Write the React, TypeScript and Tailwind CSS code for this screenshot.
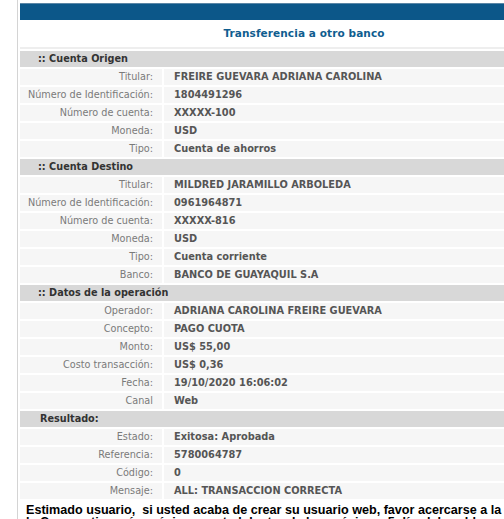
import React from "react";

type Row = [string, string];
type Section = { title: string; rows: Row[]; indent?: boolean };

const sections: Section[] = [
  {
    title: ":: Cuenta Origen",
    rows: [
      ["Titular:", "FREIRE GUEVARA ADRIANA CAROLINA"],
      ["Número de Identificación:", "1804491296"],
      ["Número de cuenta:", "XXXXX-100"],
      ["Moneda:", "USD"],
      ["Tipo:", "Cuenta de ahorros"],
    ],
  },
  {
    title: ":: Cuenta Destino",
    rows: [
      ["Titular:", "MILDRED JARAMILLO ARBOLEDA"],
      ["Número de Identificación:", "0961964871"],
      ["Número de cuenta:", "XXXXX-816"],
      ["Moneda:", "USD"],
      ["Tipo:", "Cuenta corriente"],
      ["Banco:", "BANCO DE GUAYAQUIL S.A"],
    ],
  },
  {
    title: ":: Datos de la operación",
    rows: [
      ["Operador:", "ADRIANA CAROLINA FREIRE GUEVARA"],
      ["Concepto:", "PAGO CUOTA"],
      ["Monto:", "US$ 55,00"],
      ["Costo transacción:", "US$ 0,36"],
      ["Fecha:", "19/10/2020 16:06:02"],
      ["Canal", "Web"],
    ],
  },
  {
    title: "Resultado:",
    indent: true,
    rows: [
      ["Estado:", "Exitosa: Aprobada"],
      ["Referencia:", "5780064787"],
      ["Código:", "0"],
      ["Mensaje:", "ALL: TRANSACCION CORRECTA"],
    ],
  },
];

export default function App() {
  return (
    <div className="w-[504px] h-[519px] overflow-hidden bg-white" style={{ fontFamily: '"DejaVu Sans", Verdana, sans-serif' }}>
      <div className="flex">
        <div className="w-[17px] shrink-0" />
        <div className="w-[1px] shrink-0 bg-[#d4d4d4] h-[519px]" />
        <div className="w-[570px] shrink-0 pl-[2px] pt-[3px]">
          <div className="h-[17px] bg-[#0c5789] border-t border-[#5a86a6]" />
          <div className="h-[29px] flex items-center justify-center border-b-2 border-[#eeeeee]">
            <span className="text-[10.5px] font-bold text-[#0f5d8f] tracking-[0.1px]">Transferencia a otro banco</span>
          </div>
          <div className="flex flex-col gap-[2px] pt-[2px]">
            {sections.map((s) => (
              <React.Fragment key={s.title}>
                <div className="h-[16px] bg-[#d8d8d8] flex items-center">
                  <span className={`text-[9.7px] font-bold text-[#333333] ${s.indent ? "pl-[20px]" : "pl-[18px]"}`}>{s.title}</span>
                </div>
                {s.rows.map(([l, v]) => (
                  <div key={s.title + l} className="h-[16px] flex gap-[2px]">
                    <div className="w-[142px] shrink-0 bg-[#f6f6f6] flex items-center justify-end pr-[9px]">
                      <span className="text-[9.7px] text-[#7a7a7a]">{l}</span>
                    </div>
                    <div className="flex-1 bg-[#f6f6f6] flex items-center pl-[10px]">
                      <span className="text-[9.8px] font-bold text-[#555555]">{v}</span>
                    </div>
                  </div>
                ))}
              </React.Fragment>
            ))}
          </div>
          <div
            className="pl-[6px] pt-[5px] text-[12.6px] font-bold leading-[12px] text-black whitespace-nowrap"
            style={{ fontFamily: '"Liberation Sans", Arial, sans-serif' }}
          >
            <div>Estimado usuario,&nbsp; si usted acaba de crear su usuario web, favor acercarse a la</div>
            <div>la Cooperativa más próxima a usted dentro de los próximos 5 días laborables a</div>
          </div>
        </div>
      </div>
    </div>
  );
}
